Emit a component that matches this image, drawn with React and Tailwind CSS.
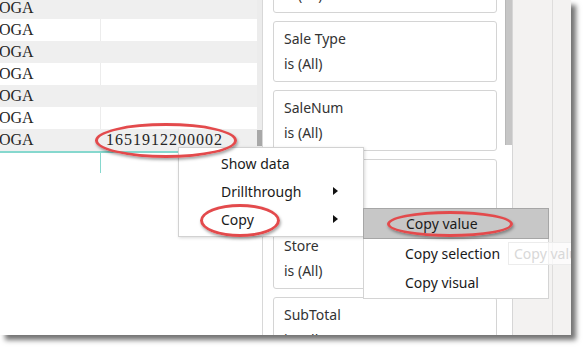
const rows = [
  { shade: true, value: "" },
  { shade: false, value: "" },
  { shade: true, value: "" },
  { shade: false, value: "" },
  { shade: true, value: "" },
  { shade: false, value: "" },
  { shade: true, value: "1651912200002" },
];

const cards = [
  { title: "Sale Date", value: "is (All)" },
  { title: "Sale Type", value: "is (All)" },
  { title: "SaleNum", value: "is (All)" },
  { title: "SalesPerson", value: "is (All)" },
  { title: "Store", value: "is (All)" },
  { title: "SubTotal", value: "is (All)" },
];

function Arrow() {
  return (
    <svg width="5" height="8" viewBox="0 0 5 8" className="absolute right-[25px] top-1/2 -translate-y-1/2">
      <polygon points="0,0 5,4 0,8" fill="#111" />
    </svg>
  );
}

function Ring({ className }) {
  return (
    <div
      className={
        "absolute rounded-[50%] border-[3px] border-[#e34a4c] shadow-[1px_2px_3px_rgba(0,0,0,0.35)] " +
        className
      }
    />
  );
}

export default function App() {
  return (
    <div className="w-[586px] h-[351px] bg-white font-['Noto_Sans',sans-serif]">
      <div className="relative w-[571px] h-[335px] flex overflow-hidden bg-white shadow-[5px_5px_5px_rgba(0,0,0,0.55)]">
        {/* table */}
        <div className="w-[262px] flex flex-col shrink-0">
          <div className="flex -mt-[3px]">
            <div className="w-[257px] flex flex-col">
              {rows.map((r, i) => (
                <div
                  key={i}
                  className={
                    "h-[22px] flex items-center font-['Liberation_Serif',serif] text-[16px] text-[#262626] " +
                    (r.shade ? "bg-[#efefef]" : "bg-white")
                  }
                >
                  <div className="w-[100px] shrink-0 overflow-hidden">
                    <span className="block -ml-[1px]">OGA</span>
                  </div>
                  <div
                    className={
                      "flex-1 h-full flex items-center pl-[6px] tracking-[1px] " +
                      (r.shade ? "" : "border-l border-[#ececec]")
                    }
                  >
                    {r.value}
                  </div>
                </div>
              ))}
            </div>
            <div className="w-[5px] bg-[#ececec] flex flex-col justify-end pb-[5px]">
              <div className="h-[16px] bg-[#a8a8a8]" />
            </div>
          </div>
          <div className="w-[257px] h-[2px] bg-[#86d8ce]" />
          <div className="w-[101px] h-[20px] border-r-[1.5px] border-[#86d8ce]" />
        </div>

        {/* filter pane */}
        <div className="w-[250px] shrink-0 border-l border-[#d8d8d8] flex">
          <div className="pl-[10px] w-[234px]">
            <div className="-mt-[48px] flex flex-col gap-[8px]">
              {cards.map((c) => (
                <div
                  key={c.title}
                  className="h-[61px] shrink-0 border border-[#d4d4d4] rounded-[3px] pl-[10px] pt-[4px] text-[14px] leading-[25px] text-[#333]"
                >
                  <div>{c.title}</div>
                  <div>{c.value}</div>
                </div>
              ))}
            </div>
          </div>
          <div className="ml-[8px] w-[7px] h-[145px] bg-[#c6c6c6] border-l border-[#b8b8b8]" />
        </div>

        {/* right strip */}
        <div className="flex-1 border-l border-[#d6d6d6] bg-[#f3f2f1] flex">
          <div className="w-[40px] border-r border-[#dedddc]" />
        </div>

        {/* context menu */}
        <div className="absolute left-[178px] top-[147px] w-[186px] h-[90px] bg-white border border-[#d2d2d2] shadow-[1px_1px_3px_rgba(0,0,0,0.15)] pt-[1px] text-[14px] text-[#1a1a1a]">
          <div className="relative h-[28px] flex items-center pl-[42px]">Show data</div>
          <div className="relative h-[28px] flex items-center pl-[42px]">
            Drillthrough
            <Arrow />
          </div>
          <div className="relative h-[28px] flex items-center pl-[42px]">
            Copy
            <Arrow />
          </div>
        </div>

        {/* submenu */}
        <div className="absolute left-[363px] top-[208px] w-[186px] h-[91px] bg-white border border-[#d4d4d4] text-[14px] text-[#1a1a1a]">
          <div className="-mx-[1px] -mt-[1px] h-[31px] flex items-center pl-[42px] bg-[#c7c7c7] border border-[#a6a6a6]">
            Copy value
          </div>
          <div className="h-[29px] flex items-center pl-[41px]">Copy selection</div>
          <div className="h-[29px] flex items-center pl-[41px]">Copy visual</div>
        </div>

        {/* fading tooltip over submenu */}
        <div className="absolute left-[508px] top-[242px] h-[23px] pl-[5px] pr-[8px] border border-[#ececec] bg-white/70 text-[14px] leading-[21px] text-[#d8d8d8] whitespace-nowrap">
          Copy value
        </div>

        {/* highlight rings */}
        <Ring className="left-[95px] top-[123px] w-[142px] h-[35px]" />
        <Ring className="left-[200px] top-[204px] w-[80px] h-[33px]" />
        <Ring className="left-[387px] top-[211px] w-[126px] h-[26px]" />
      </div>
    </div>
  );
}
